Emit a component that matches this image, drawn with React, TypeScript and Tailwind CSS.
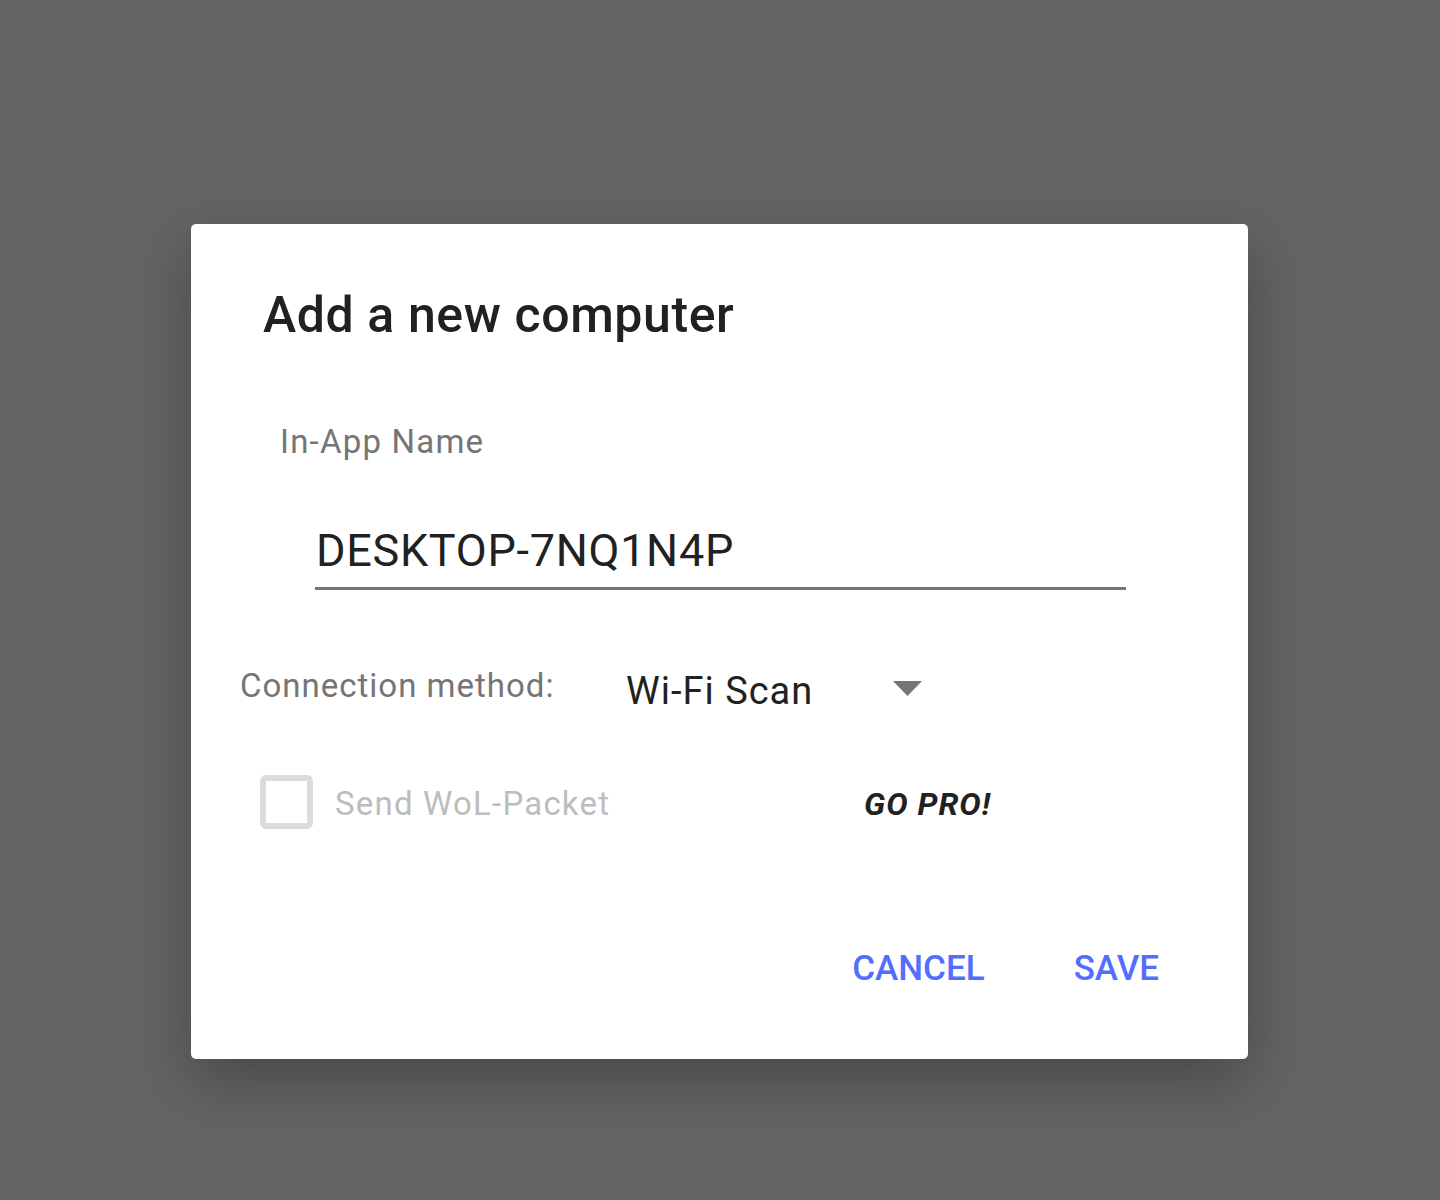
import React from "react";

const font = { fontFamily: "Roboto, 'Noto Sans', sans-serif" };

export default function App() {
  return (
    <div className="min-h-[1200px] w-full bg-[#646464] flex pl-[191px] pt-[224px]" style={font}>
      <div className="w-[1057px] h-[835px] bg-white rounded-[5px] shadow-[0_22px_60px_rgba(0,0,0,0.28)] flex flex-col">
        {/* title */}
        <h1 className="pl-[72px] pt-[62px] text-[50px] leading-[58px] font-medium tracking-[0.6px] text-[#212121]">
          Add a new computer
        </h1>

        {/* name field */}
        <div className="pl-[89px] mt-[78px] text-[33px] leading-[40px] tracking-[1.2px] text-[#757575]">In-App Name</div>
        <div className="ml-[124px] w-[811px] mt-[63px]">
          <div className="text-[45px] leading-[52px] tracking-[0.7px] text-[#212121] pl-[1px]">DESKTOP-7NQ1N4P</div>
          <div className="mt-[10px] h-[3px] bg-[#757575]" />
        </div>

        {/* connection method */}
        <div className="flex items-start pl-[49px] mt-[76px]">
          <span className="w-[386px] text-[33px] leading-[40px] tracking-[1px] text-[#757575]">Connection method:</span>
          <span className="w-[267px] mt-[3px] text-[38px] leading-[44px] tracking-[1px] text-[#212121]">Wi-Fi Scan</span>
          <svg className="mt-[15px]" width="29" height="15" viewBox="0 0 29 15">
            <path d="M0 0 H29 L14.5 15 Z" fill="#757575" />
          </svg>
        </div>

        {/* wol */}
        <div className="flex items-center pl-[69px] mt-[62px] h-[54px]">
          <div className="w-[53px] h-[54px] border-[6px] border-[#dcdcdc] rounded-[6px]" />
          <span className="ml-[22px] mt-[3px] w-[529px] text-[33px] leading-[40px] tracking-[1.2px] text-[#bdbdbd]">Send WoL-Packet</span>
          <span className="mt-[4px] text-[32px] leading-[40px] font-bold italic tracking-[1px] text-[#212121]">GO PRO!</span>
        </div>

        {/* actions */}
        <div className="flex justify-end items-center gap-[89px] pr-[89px] mt-[118px]">
          <button className="text-[35px] leading-[44px] font-medium text-[#536dfe]">CANCEL</button>
          <button className="text-[35px] leading-[44px] font-medium text-[#536dfe]">SAVE</button>
        </div>
      </div>
    </div>
  );
}
